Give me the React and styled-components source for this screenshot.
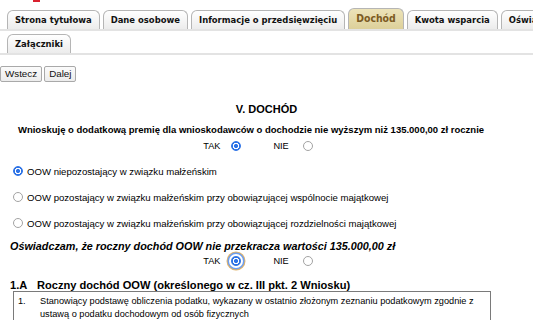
import React from 'react';
import styled, { createGlobalStyle } from 'styled-components';

const GlobalStyle = createGlobalStyle`
  html, body {
    margin: 0;
    padding: 0;
    background: #fff;
    overflow: hidden;
  }
  body {
    font-family: "Liberation Sans", Arial, sans-serif;
    color: #000;
  }
`;

const Page = styled.div`
  width: 533px;
  height: 320px;
  overflow: hidden;
  position: relative;
`;

const Logo = styled.div`
  position: absolute;
  top: 0;
  left: 33px;
  width: 7px;
  height: 2px;
  background: #d9212f;
`;

const TabRow = styled.div`
  display: flex;
  gap: 3px;
  padding: ${(p) => (p.first ? '10px' : '3px')} 0 0 7px;
  border-bottom: 2px solid #e3e3e3;
  white-space: nowrap;
`;

const Tab = styled.div`
  flex: none;
  height: 18px;
  line-height: 18px;
  padding: 0 7px;
  border: 1px solid #b5b5b5;
  border-bottom: none;
  border-radius: 6px 6px 0 0;
  font-family: "DejaVu Sans Condensed", "DejaVu Sans", sans-serif;
  font-weight: bold;
  font-size: 9.4px;
  color: ${(p) => (p.active ? '#7b5a22' : '#111')};
  background: ${(p) =>
    p.active
      ? 'linear-gradient(#ece3b9, #ddd09a)'
      : 'linear-gradient(#ffffff, #ececec)'};
  ${(p) => p.active && 'margin-top: -2px; height: 20px; line-height: 18px; font-size: 10.4px;'}
`;

const Nav = styled.div`
  display: flex;
  gap: 2px;
  margin-top: 11px;
`;

const NavButton = styled.button`
  height: 16px;
  padding: 0 4px;
  font-family: "Liberation Sans", Arial, sans-serif;
  font-size: 9.8px;
  color: #111;
  background: linear-gradient(#fbfbfb, #ececec);
  border: 1px solid #a9a9a9;
  border-radius: 2px;
  line-height: 14px;
`;

const Title = styled.h2`
  margin: 21px 0 0;
  text-align: center;
  font-size: 11px;
  font-weight: bold;
`;

const Question = styled.div`
  margin-top: 9px;
  text-align: center;
  font-size: 9.5px;
  font-weight: bold;
  padding-right: 31px;
`;

const YesNo = styled.div`
  display: flex;
  justify-content: center;
  align-items: center;
  margin-top: ${(p) => p.top || 4}px;
  padding-right: 17px;
  font-size: 9.2px;
  height: 12px;
`;

const Choice = styled.label`
  display: flex;
  align-items: center;
  gap: ${(p) => (p.last ? 14 : 11)}px;
  margin-right: ${(p) => (p.last ? 0 : 32)}px;
`;

const Radio = styled.span`
  display: inline-block;
  flex: none;
  width: 10px;
  height: 10px;
  border-radius: 50%;
  box-sizing: border-box;
  border: 1px solid ${(p) => (p.checked ? '#2d73e6' : '#a3a3a3')};
  background: ${(p) =>
    p.checked
      ? 'radial-gradient(circle, #2d73e6 0 1.8px, #ffffff 2.3px 2.9px, #2d73e6 3.4px)'
      : '#fff'};
  ${(p) =>
    p.focus &&
    'box-shadow: 0 0 0 2px #fff, 0 0 0 3.5px #6d9ff0, 0 0 0 4.5px #e2b368;'}
`;

const Options = styled.div`
  margin-top: 13px;
  padding-left: 13px;
  display: flex;
  flex-direction: column;
  gap: 14px;
`;

const Option = styled.label`
  display: flex;
  align-items: center;
  gap: 4px;
  font-size: 9.6px;
  height: 12px;
`;

const Statement = styled.div`
  margin: 11px 0 0 10px;
  font-size: 10.8px;
  font-weight: bold;
  font-style: italic;
`;

const SectionHead = styled.div`
  display: flex;
  margin: 13px 0 0 10px;
  font-size: 11.1px;
  line-height: 11px;
  font-weight: bold;
  span:first-child {
    width: 27px;
    flex: none;
  }
`;

const Table = styled.div`
  margin: 0 0 0 13px;
  width: 478px;
  box-sizing: border-box;
  border: 1px solid #7a7a7a;
  padding: 3px 0 0 4px;
  display: grid;
  grid-template-columns: 22px 1fr;
  font-size: 9.2px;
  line-height: 13px;
`;

export default function App() {
  const topTabs = [
    'Strona tytułowa',
    'Dane osobowe',
    'Informacje o przedsięwzięciu',
    'Dochód',
    'Kwota wsparcia',
    'Oświadczenia',
  ];

  return (
    <Page>
      <GlobalStyle />
      <Logo />
      <TabRow first>
        {topTabs.map((t) => (
          <Tab key={t} active={t === 'Dochód'}>
            {t}
          </Tab>
        ))}
      </TabRow>
      <TabRow>
        <Tab>Załączniki</Tab>
      </TabRow>

      <Nav>
        <NavButton>Wstecz</NavButton>
        <NavButton>Dalej</NavButton>
      </Nav>

      <Title>V. DOCHÓD</Title>
      <Question>
        Wnioskuję o dodatkową premię dla wnioskodawców o dochodzie nie wyższym niż 135.000,00 zł rocznie
      </Question>
      <YesNo top={5}>
        <Choice>
          TAK <Radio checked />
        </Choice>
        <Choice last>
          NIE <Radio />
        </Choice>
      </YesNo>

      <Options>
        <Option>
          <Radio checked /> OOW niepozostający w związku małżeńskim
        </Option>
        <Option>
          <Radio /> OOW pozostający w związku małżeńskim przy obowiązującej wspólnocie majątkowej
        </Option>
        <Option>
          <Radio /> OOW pozostający w związku małżeńskim przy obowiązującej rozdzielności majątkowej
        </Option>
      </Options>

      <Statement>
        Oświadczam, że roczny dochód OOW nie przekracza wartości 135.000,00 zł
      </Statement>
      <YesNo top={3}>
        <Choice>
          TAK <Radio checked focus />
        </Choice>
        <Choice last>
          NIE <Radio />
        </Choice>
      </YesNo>

      <SectionHead>
        <span>1.A</span>
        <span>Roczny dochód OOW (określonego w cz. III pkt. 2 Wniosku)</span>
      </SectionHead>
      <Table>
        <span>1.</span>
        <span>
          Stanowiący podstawę obliczenia podatku, wykazany w ostatnio złożonym zeznaniu podatkowym zgodnie z
          ustawą o podatku dochodowym od osób fizycznych
        </span>
      </Table>
    </Page>
  );
}
